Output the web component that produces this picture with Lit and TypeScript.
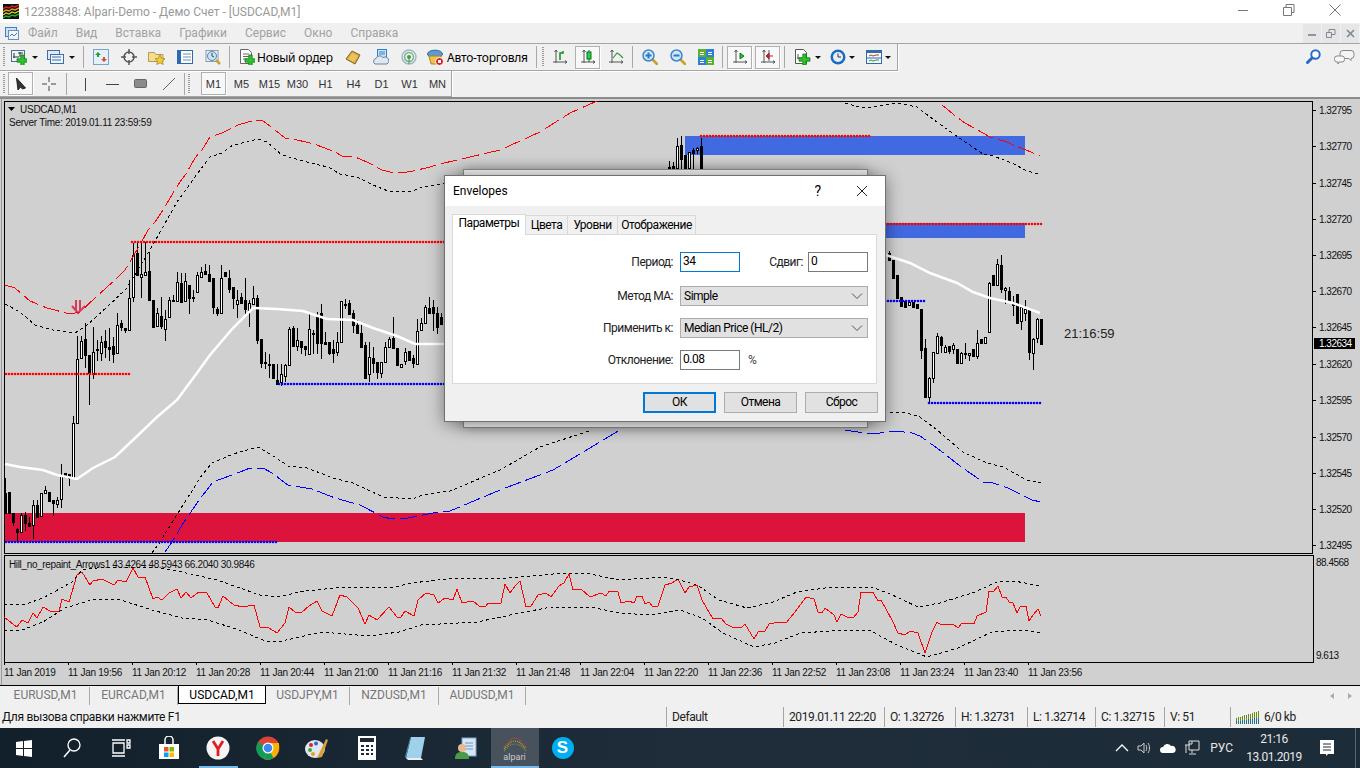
import { LitElement, html, css, svg } from "lit";
import { customElement } from "lit/decorators.js";

// candles are [bodyTop, bodyBottom, high, low, white?] measured on a 3x crop, 0 = no wick
type Bar = number[];
const LEFT: Bar[] = [
  [790,850,745,0,0],[785,850,0,0,0],[850,875,0,885,0],[897,905,895,935,0],[855,905,850,0,1],[855,880,845,900,0],
  [880,888,860,0,0],[825,885,810,925,1],[825,860,810,0,0],[790,858,0,0,1],[780,790,768,0,1],[785,812,0,0,0],
  [810,818,0,855,0],[810,822,800,830,1],[735,808,702,830,1],[730,740,0,0,0],[733,745,0,765,0],[580,745,558,0,1],
  [388,578,318,0,1],[333,385,318,0,1],[328,375,280,410,0],[375,430,0,523,0],[365,432,290,445,1],[358,360,330,390,0],
  [335,368,318,390,1],[333,350,300,380,0],[352,356,295,390,0],[348,372,320,395,0],[285,368,250,0,1],[280,290,270,300,0],
  [295,300,0,305,0],[205,300,150,0,1],[75,200,40,212,1],[70,135,40,0,0],[132,142,40,200,1],[125,135,35,0,1],
  [123,210,65,0,0],[210,290,0,0,0],[250,288,235,0,1],[258,288,200,295,0],[268,298,240,330,1],[210,262,200,0,1],
  [210,212,195,0,0],[155,212,125,0,1],[158,215,130,0,0],[152,212,130,0,1],[165,205,0,250,0],[200,205,180,212,0],
  [135,185,125,0,1],[127,142,110,0,1],[124,132,102,0,0],[132,152,105,0,0],[145,232,0,250,0],[237,248,230,255,0],
  [145,250,105,0,1],[127,137,0,0,0],[145,178,120,185,0],[172,205,0,235,0],[210,222,180,260,1],[200,220,190,0,0],
  [210,238,145,248,0],[220,240,210,288,1],[205,223,168,0,1],[203,330,195,340,0],[327,398,0,412,0],[397,399,365,415,0],
  [402,404,372,440,0],[402,445,0,0,0],[450,462,402,0,0],[433,455,402,465,1],[405,437,402,452,1],[298,404,290,0,1],
  [295,348,288,0,0],[330,348,295,360,1],[333,350,0,370,0],[348,358,0,375,0],[298,373,250,0,1],[310,312,300,370,0],
  [262,340,245,370,0],[250,340,222,383,0],[335,342,305,0,0],[335,368,0,372,0],[358,368,330,395,0],[335,365,305,375,1],
  [213,335,0,0,1],[221,224,208,235,0],[220,252,210,0,0],[250,285,240,305,0],[285,308,270,0,0],[308,350,280,0,0],
  [345,445,335,0,0],[382,433,335,452,1],[385,398,350,425,0],[397,427,0,443,0],[395,428,0,440,1],[350,395,335,0,1],
  [328,350,320,0,1],[323,355,262,0,0],[355,405,0,0,0],[403,412,0,0,1],[365,393,355,402,1],[363,390,0,0,0],
  [385,400,375,410,0],[302,403,268,0,1],[278,300,265,0,1],[232,280,225,0,1],[235,248,202,0,0],[232,250,210,300,0],
  [250,290,232,310,0],[262,283,250,0,0],
];
const RIGHT: Bar[] = [
  [68,90,62,0,0],[90,145,0,0,0],[135,205,0,0,0],[202,228,0,0,0],[213,230,0,0,0],[215,224,0,0,1],[215,230,0,0,0],
  [222,234,0,0,0],[237,360,0,383,0],[355,500,328,0,0],[445,500,440,520,1],[367,443,365,455,1],[318,368,308,0,1],
  [322,345,318,365,0],[352,365,345,0,1],[347,362,0,368,0],[345,358,340,370,1],[358,398,0,0,0],[368,398,365,400,1],
  [368,373,340,385,1],[368,375,0,390,1],[358,378,0,0,0],[338,378,300,383,1],[328,338,0,0,0],[320,340,0,0,1],
  [160,307,155,0,1],[135,165,0,0,0],[103,165,87,0,1],[105,178,75,185,0],[175,180,170,220,1],[182,213,170,0,0],
  [215,225,198,255,0],[193,278,0,0,0],[232,272,225,297,1],[238,248,210,270,1],[235,365,0,388,0],[327,368,325,417,1],
  [268,325,265,335,1],[268,342,0,0,0],
];
const TOP: Bar[] = [
  [215,220,198,0,0],[212,220,200,0,0],[153,220,130,0,1],[150,192,123,220,0],[180,220,0,0,0],[172,220,0,0,1],
  [165,173,158,220,0],[160,165,155,175,1],[153,220,128,0,0],
];

const pts = (a: number[][]) => a.map((p) => p.join(",")).join(" ");
const RED_A = [[5,285],[15,288],[23,295],[30,301],[47,308],[70,314],[80,312],[95,298],[117,278],[125,270],[140,245],[148,230],[155,222],[165,207],[170,198],[180,182],[186,174],[195,158],[202,150],[210,137],[222,133],[238,125],[255,120],[263,121],[270,126],[285,138],[293,139],[310,143],[317,145],[335,152],[342,156],[355,157],[367,162],[382,170],[390,172],[407,172],[413,171],[430,167],[440,164],[500,150],[540,132],[570,113],[597,101]];
const RED_B = [[942,105],[958,118],[965,123],[983,133],[990,137],[1007,142],[1013,145],[1031,152],[1040,156]];
const BLK_A = [[5,304],[20,312],[35,325],[53,330],[75,333],[87,325],[107,307],[127,288],[142,263],[147,255],[163,227],[177,202],[200,170],[210,157],[222,153],[233,145],[247,142],[258,139],[267,142],[282,155],[293,158],[310,163],[328,167],[340,174],[357,177],[373,185],[388,191],[412,191],[420,188],[440,184],[462,178]];
const BLK_B = [[845,103],[863,108],[880,106],[897,103],[917,107],[930,117],[955,135],[983,154],[993,156],[1012,163],[1027,171],[1039,174]];
const BLK_C = [[152,553],[160,542],[178,513],[202,475],[212,463],[233,454],[258,447],[275,457],[288,466],[307,468],[333,478],[353,483],[383,497],[412,499],[423,495],[450,491],[500,470],[540,447],[592,430]];
const BLK_D = [[890,412],[907,413],[920,417],[937,430],[963,452],[987,463],[1003,467],[1027,480],[1041,483]];
const BLU_A = [[165,552],[172,542],[182,525],[197,503],[203,495],[213,482],[240,472],[250,468],[263,468],[272,473],[288,485],[312,489],[335,498],[360,505],[383,517],[392,519],[408,518],[433,513],[450,511],[500,490],[553,470],[620,430]];
const BLU_B = [[845,430],[870,434],[880,433],[895,431],[912,433],[920,436],[937,448],[960,466],[983,482],[993,483],[1008,488],[1032,500],[1041,502]];
const MA_A = [[5,464],[20,467],[43,470],[57,475],[77,479],[93,468],[115,457],[133,440],[157,417],[177,400],[197,373],[210,355],[233,328],[253,308],[277,309],[303,311],[327,319],[353,320],[373,328],[397,336],[415,344],[446,344]];
const MA_B = [[886,255],[910,263],[930,273],[957,283],[973,292],[990,298],[1013,303],[1040,313]];
const SUB_RED = [[4,617],[9,621],[17,627],[22,620],[28,623],[33,613],[37,618],[43,607],[50,611],[59,612],[62,599],[69,602],[77,575],[82,572],[90,585],[93,581],[102,579],[114,585],[118,580],[126,582],[133,568],[138,577],[145,577],[153,599],[157,597],[162,600],[169,593],[177,589],[181,598],[186,592],[191,598],[199,592],[207,593],[215,607],[218,608],[223,596],[234,605],[243,607],[254,605],[260,627],[269,628],[277,633],[285,623],[289,607],[295,612],[301,613],[309,606],[317,601],[322,611],[332,616],[340,595],[347,597],[358,608],[365,624],[369,615],[377,620],[389,607],[397,617],[401,617],[405,611],[414,616],[418,600],[426,593],[434,595],[438,603],[445,598],[453,600],[457,589],[462,603],[473,601],[479,606],[486,606],[488,603],[501,603],[505,584],[510,593],[516,585],[520,581],[526,607],[531,606],[538,595],[546,593],[551,597],[559,586],[564,583],[569,574],[573,590],[581,589],[590,597],[601,593],[606,596],[609,591],[618,592],[621,603],[629,601],[634,603],[637,596],[642,596],[645,604],[649,602],[653,607],[658,606],[665,585],[672,583],[678,579],[685,593],[689,587],[697,585],[702,600],[713,619],[721,618],[726,624],[732,627],[741,628],[745,624],[754,639],[758,632],[765,631],[769,624],[780,622],[786,623],[795,612],[801,604],[806,597],[814,599],[818,612],[822,613],[825,608],[834,615],[837,622],[841,614],[847,617],[853,618],[858,612],[861,592],[873,592],[878,601],[881,600],[892,620],[898,633],[905,635],[910,631],[918,633],[925,653],[932,632],[937,622],[941,625],[953,624],[958,628],[962,623],[974,624],[977,616],[986,612],[989,591],[993,592],[998,586],[1002,597],[1006,597],[1009,602],[1013,603],[1017,613],[1020,607],[1026,606],[1029,621],[1033,615],[1038,609],[1041,616]];
const SUB_UP = [[4,604],[26,604],[43,598],[72,582],[82,570],[104,567],[160,568],[182,572],[217,580],[260,595],[278,597],[304,591],[347,587],[390,588],[412,583],[455,578],[499,579],[520,577],[564,573],[585,573],[620,580],[663,577],[680,580],[697,585],[719,600],[747,608],[773,602],[797,592],[832,587],[871,587],[888,593],[918,607],[940,603],[975,592],[997,582],[1014,581],[1041,586]];
const SUB_DN = [[4,630],[22,630],[43,622],[65,608],[95,599],[121,600],[152,610],[182,618],[208,620],[239,630],[265,641],[282,641],[321,632],[369,636],[399,632],[421,625],[477,622],[520,613],[551,607],[590,607],[620,613],[650,615],[680,610],[702,618],[723,633],[754,647],[775,643],[801,633],[845,630],[871,631],[897,645],[927,657],[958,648],[992,632],[1023,630],[1041,633]];

const PRICES: [string, number][] = [["1.32795",110],["1.32770",146],["1.32745",183],["1.32720",219],["1.32695",255],["1.32670",291],["1.32645",327],["1.32620",364],["1.32595",400],["1.32570",437],["1.32545",473],["1.32520",509],["1.32495",545]];
const TIMES = ["11 Jan 2019","11 Jan 19:56","11 Jan 20:12","11 Jan 20:28","11 Jan 20:44","11 Jan 21:00","11 Jan 21:16","11 Jan 21:32","11 Jan 21:48","11 Jan 22:04","11 Jan 22:20","11 Jan 22:36","11 Jan 22:52","11 Jan 23:08","11 Jan 23:24","11 Jan 23:40","11 Jan 23:56"];

function candles(bars: Bar[], x0: number, y0: number, sx = 3) {
  return bars.map((b, i) => {
    const x = Math.floor(x0 + 4 * i);
    const top = Math.round(y0 + b[0] / sx);
    const bot = Math.round(y0 + b[1] / sx);
    const hi = b[2] ? Math.round(y0 + b[2] / sx) : top;
    const lo = b[3] ? Math.round(y0 + b[3] / sx) : bot;
    return svg`<rect x=${x} y=${hi} width="1" height=${lo - hi + 1} fill="#000"></rect>
      <rect x=${x - 1} y=${top} width="3" height=${Math.max(bot - top + 1, 2)} fill="#000"></rect>
      ${b[4] && bot - top > 1 ? svg`<rect x=${x} y=${top + 1} width="1" height=${bot - top - 1} fill="#fff"></rect>` : ""}`;
  });
}

const ic = (body: unknown, w = 16, h = 16) =>
  html`<svg class="ic" width=${w} height=${h} viewBox="0 0 ${w} ${h}">${body}</svg>`;

const plus = (x: number, y: number, s = 11) => svg`<path transform="translate(${x} ${y})" d="M${s * 0.35} 0h${s * 0.3}v${s * 0.35}h${s * 0.35}v${s * 0.3}h${-s * 0.35}v${s * 0.35}h${-s * 0.3}v${-s * 0.35}H0v${-s * 0.3}h${s * 0.35}z" fill="#2fc42f" stroke="#0e7a12" stroke-width=".8"></path>`;
const axes = svg`<path d="M4 1v13M1 13h14M2.500 3L4 1l1.500 2M13 11.500l2 1.500-2 1.500" fill="none" stroke="#555"></path>`;
const magnifier = (sign: string) => svg`<path d="M10 10l5 5" stroke="#c9a227" stroke-width="2.600" stroke-linecap="round"></path>
  <circle cx="6.500" cy="6.500" r="5.500" fill="#cfe6fa" stroke="#3f86c8" stroke-width="1.500"></circle>
  <path d=${sign} stroke="#2f78be" stroke-width="2"></path>`;

const ICONS = {
  app: svg`<rect width="16" height="15" fill="#111"></rect><path d="M0 5l3-2 3 1 3-2 3 1 4-2" fill="none" stroke="#e02020" stroke-width="1.500"></path><path d="M0 8l3-2 3 1 3-2 3 1 4-2" fill="none" stroke="#e0a020" stroke-width="1.500"></path><path d="M0 11l3-2 3 1 3-2 3 1 4-2" fill="none" stroke="#d8d820" stroke-width="1.200"></path><path d="M0 14l3-2 3 1 3-2 3 1 4-2" fill="none" stroke="#20b030" stroke-width="1.500"></path>`,
  mdi: svg`<rect x=".5" y="2.500" width="11" height="9" fill="#cfe2f5" stroke="#3c7fc4"></rect><rect x="3.500" y="5.500" width="10" height="9" fill="#eef5fc" stroke="#6a8fb5"></rect><path d="M5 11l2-2 2 2 3-3" fill="none" stroke="#4a76a8"></path>`,
  newChart: svg`<rect x=".5" y="1.500" width="13" height="11" fill="#eef3f8" stroke="#4c6f92"></rect><path d="M3 4v5M2 8h6M9 3v5M7 4h5" stroke="#333" fill="none"></path>${plus(6, 6)}`,
  profiles: svg`<rect x=".5" y="1.500" width="12" height="9" fill="#dfeaf6" stroke="#3d6fa5"></rect><rect x="3.500" y="5.500" width="13" height="9" fill="#eef4fb" stroke="#3d6fa5"></rect><path d="M5 8h9M5 11h9" stroke="#3d6fa5"></path>`,
  market: svg`<rect x=".5" y=".5" width="15" height="15" fill="#e6f0fa" stroke="#7aa3cc"></rect><path d="M5 3l3 3H6v2H4V6H2z" fill="#25a035"></path><path d="M11 13l3-3h-2V8h-2v2H8z" fill="#d8502a"></path>`,
  cross: svg`<circle cx="8" cy="8" r="5" fill="none" stroke="#555" stroke-width="1.500"></circle><path d="M8 0v5M8 11v5M0 8h5M11 8h5" stroke="#555" stroke-width="1.500"></path>`,
  folder: svg`<path d="M.5 3.500h6l1.500 2h7v7H.5z" fill="#f3dc94" stroke="#b79a4a"></path><path d="M12 6l1.700 3.300 3.300.5-2.500 2.300.7 3.400-3.200-1.700-3.200 1.700.7-3.400L7 9.800l3.300-.5z" fill="#f2c93a" stroke="#a88a1e" stroke-width=".8"></path>`,
  list: svg`<rect x=".5" y="1.500" width="15" height="13" fill="#fff" stroke="#2c6cae"></rect><rect x="1" y="2" width="3" height="12" fill="#2c6cae"></rect><path d="M6 5h8M6 8h8M6 11h8" stroke="#6d8eb0"></path>`,
  tester: svg`<rect x="1" y="1.500" width="12" height="11" fill="#e9eef3" stroke="#8b9cae"></rect><circle cx="7" cy="7" r="4.500" fill="#cfe2f4" stroke="#4c88c0"></circle><path d="M7 4v3l2 1" stroke="#345" fill="none"></path><path d="M11 11l4 4" stroke="#c9a227" stroke-width="2.500"></path>`,
  order: svg`<path d="M1.500.5h8l3 3v11h-11z" fill="#fff" stroke="#666"></path><path d="M4 5h6M4 7.500h6M4 10h4" stroke="#666"></path>${plus(6, 6)}`,
  book: svg`<path d="M1 10l6-8 8 4-5 9z" fill="#d9a93e" stroke="#8a6518"></path><path d="M3 10l4.500-6 5.500 3-4 6z" fill="#eac363"></path>`,
  cloud: svg`<rect x="4.500" y=".5" width="9" height="9" fill="#cfe4f7" stroke="#2f7fc9"></rect><path d="M6 3h6M6 5h6" stroke="#2f7fc9"></path><path d="M2 15a3 3 0 0 1 1-5.500 4 4 0 0 1 7-1 3.300 3.300 0 0 1 4 6.500z" fill="#dfe8f0" stroke="#67829c"></path>`,
  signal: svg`<circle cx="8" cy="8" r="7" fill="none" stroke="#9fb6c6" stroke-width="1.500"></circle><circle cx="8" cy="8" r="4.500" fill="none" stroke="#74b77e" stroke-width="1.500"></circle><circle cx="8" cy="8" r="2" fill="#3f9a4d"></circle><path d="M8 8v7" stroke="#3f9a4d"></path>`,
  auto: svg`<ellipse cx="8" cy="5" rx="7.500" ry="3.800" fill="#5c9bd1" stroke="#33699a"></ellipse><path d="M2 7h12l-1 8H4z" fill="#f0c24a" stroke="#a8842a"></path><circle cx="12.500" cy="12.500" r="4" fill="#d62020" stroke="#fff"></circle><rect x="11" y="11" width="3" height="3" fill="#fff"></rect>`,
  bars: svg`${axes}<path d="M8 11V4h3V2" fill="none" stroke="#0d8f1c" stroke-width="1.500"></path>`,
  candle: svg`${axes}<path d="M9 1v12" stroke="#0d6f1c"></path><rect x="7" y="3" width="4" height="7" fill="#27d24a" stroke="#0d6f1c"></rect>`,
  lineCh: svg`${axes}<path d="M5 9l4-5 3 2 3 3" fill="none" stroke="#2f9a3c" stroke-width="1.200"></path>`,
  zoomIn: magnifier("M3.500 6.500h6M6.500 3.500v6"),
  zoomOut: magnifier("M3.500 6.500h6"),
  grid: svg`<rect x="0" y="0" width="8" height="8" fill="#5ab130"></rect><rect x="8" y="0" width="8" height="8" fill="#2e7fd6"></rect><rect x="0" y="8" width="8" height="8" fill="#2e7fd6"></rect><rect x="8" y="8" width="8" height="8" fill="#5ab130"></rect><path d="M2 3.500h4M2 5.500h4M10 3.500h4M10 5.500h4M2 11.500h4M2 13.500h4M10 11.500h4M10 13.500h4" stroke="#fff"></path>`,
  shift: svg`${axes}<path d="M8 4v6l4-3z" fill="#2fbf3f" stroke="#0d7a1c"></path>`,
  shiftEnd: svg`${axes}<path d="M9 1v11" stroke="#1668b8"></path><path d="M6 7h7M9 4l-3 3 3 3z" stroke="#c41e1e" fill="#c41e1e"></path>`,
  addDoc: svg`<path d="M1.500.5h8l3 3v11h-11z" fill="#fff" stroke="#555"></path><path d="M4 5v5M3 9h5" stroke="#555" fill="none"></path>${plus(5, 5)}`,
  clock: svg`<circle cx="8" cy="8" r="7.500" fill="#1b6dc1"></circle><circle cx="8" cy="8" r="5" fill="#e8eef4"></circle><path d="M8 4.500V8h3" fill="none" stroke="#333"></path>`,
  tpl: svg`<rect x=".5" y="1.500" width="15" height="13" fill="#f4f7fb" stroke="#2f6ca8"></rect><rect x="1" y="2" width="14" height="2" fill="#2f6ca8"></rect><path d="M1 9h14" stroke="#2f6ca8"></path><path d="M3 7l2-1 2 1 3-1 3 0" fill="none" stroke="#c0392b"></path><path d="M3 12l2-1 2 1 3-1 3 0" fill="none" stroke="#27a040"></path>`,
  search: svg`<circle cx="9.500" cy="5.500" r="4.200" fill="#fff" stroke="#2968c8" stroke-width="2"></circle><path d="M6 9l-4.500 4.500" stroke="#2968c8" stroke-width="3" stroke-linecap="round"></path>`,
  chat: svg`<path d="M9 1.500h8a3 3 0 0 1 3 3v2a3 3 0 0 1-3 3v2l-2-2H9a3 3 0 0 1-3-3v-2a3 3 0 0 1 3-3z" fill="#f4f4f4" stroke="#888"></path><path d="M3 7h5a2.500 2.500 0 0 1 2.500 2.500v1A2.500 2.500 0 0 1 8 13H5l-1 2v-2H3a2.500 2.500 0 0 1-2.500-2.500v-1A2.500 2.500 0 0 1 3 7z" fill="#f8f8f8" stroke="#888"></path>`,
  arrow: svg`<path d="M4.500 1l9 10-3 1-2-2v0L6 13z" fill="#333" stroke="#222" stroke-linejoin="round" transform="translate(-1 1)"></path>`,
  crossThin: svg`<path d="M8 1v5M8 10v5M1 8h5M10 8h5" stroke="#444"></path>`,
  vline: svg`<path d="M8.500 2v13" stroke="#444"></path>`,
  hline: svg`<path d="M1 8.500h13" stroke="#444"></path>`,
  rect: svg`<rect x="1.500" y="3.500" width="12" height="8" rx="1" fill="#8b8b8b" stroke="#666"></rect>`,
  diag: svg`<path d="M2 14L14 2" stroke="#666"></path>`,
};

const T = {
  win: svg`<path d="M3 5l7-1v7H3zM11 3.900L19 3v8h-8zM3 12h7v7l-7-1zM11 12h8v8l-8-1z" fill="#fff"></path>`,
  search: svg`<circle cx="13" cy="8" r="6" fill="none" stroke="#fff" stroke-width="1.300"></circle><path d="M9 13l-6 7" stroke="#fff" stroke-width="1.500"></path>`,
  view: svg`<path d="M4 6h11v10H4zM3 3h13M3 19h13M18 3h3v3h-3zM18 8h3v3h-3z" fill="none" stroke="#fff" stroke-width="1.300"></path>`,
  store: svg`<path d="M2 8h20v15H2z" fill="#fff"></path><path d="M8 8V4a4 4 0 0 1 8 0v4" fill="none" stroke="#fff" stroke-width="1.500"></path><rect x="7" y="11" width="4.500" height="4.500" fill="#f25022"></rect><rect x="12.500" y="11" width="4.500" height="4.500" fill="#7fba00"></rect><rect x="7" y="16.500" width="4.500" height="4.500" fill="#00a4ef"></rect><rect x="12.500" y="16.500" width="4.500" height="4.500" fill="#ffb900"></rect>`,
  yandex: svg`<circle cx="12" cy="12" r="11.500" fill="#f4f4f4"></circle><path d="M7 5l5 8v7M17 5l-5 8" fill="none" stroke="#e02020" stroke-width="2.800"></path>`,
  chrome: svg`<circle cx="12" cy="12" r="11.500" fill="#db4437"></circle><path d="M12 12L2 6A11.500 11.500 0 0 0 8 23z" fill="#0f9d58"></path><path d="M12 12l-4 11A11.500 11.500 0 0 0 23 12V7H12z" fill="#f4b400"></path><path d="M12 12l-4 11a11.500 11.500 0 0 0 9.500-1z" fill="#0f9d58"></path><circle cx="12" cy="12" r="5.500" fill="#fff"></circle><circle cx="12" cy="12" r="4.300" fill="#4285f4"></circle>`,
  paint: svg`<ellipse cx="10" cy="13" rx="10" ry="9" fill="#dfe8ee"></ellipse><circle cx="6" cy="9" r="2" fill="#d23"></circle><circle cx="11" cy="7.500" r="2" fill="#3a5fd0"></circle><circle cx="5" cy="14" r="2" fill="#3aa84a"></circle><circle cx="8" cy="18" r="2" fill="#e8a020"></circle><path d="M12 22L21 3l2 1-6 17z" fill="#d8a03a"></path>`,
  calc: svg`<rect x="3" y="0" width="18" height="24" fill="#fff"></rect><rect x="5" y="2" width="14" height="4" fill="#1b2a38"></rect><path d="M6 9h3v2H6zM11 9h3v2h-3zM16 9h2v2h-2zM6 13h3v2H6zM11 13h3v2h-3zM16 13h2v2h-2zM6 17h3v2H6zM11 17h3v2h-3zM16 17h2v2h-2z" fill="#1b2a38"></path>`,
  note: svg`<path d="M7 1h14l-4 21H2z" fill="#9fd2ea"></path><path d="M2 22h15l2 2H4z" fill="#e8eef2"></path><path d="M7 1L2 22l-1-1L6 2z" fill="#4b8fb0"></path>`,
  people: svg`<rect x="8" y="2" width="14" height="18" fill="#d6e6f5" stroke="#7ea6cc"></rect><path d="M11 7h8M11 10h8M11 13h8" stroke="#6a96c4"></path><circle cx="8" cy="12" r="4" fill="#e8b890"></circle><path d="M1 23c0-6 3-7 7-7s7 1 7 7z" fill="#4a9a48"></path>`,
  alpari: svg`<path d="M2 13c5-5 7-9 11-9s6 4 11 9" fill="none" stroke="#d04a2a" stroke-width="1.200" stroke-dasharray="1 1"></path><path d="M2 15c5-5 7-8 11-8s6 3 11 8" fill="none" stroke="#d8a030" stroke-width="1.200" stroke-dasharray="1 1"></path><path d="M2 17c5-5 7-7 11-7s6 2 11 7" fill="none" stroke="#5aa040" stroke-width="1.200" stroke-dasharray="1 1"></path>`,
  up: svg`<path d="M1 11l6-6 6 6" fill="none" stroke="#fff" stroke-width="1.300"></path>`,
  speaker: svg`<path d="M1 6h3l3-3v10l-3-3H1zM9 5c1 2 1 4 0 6M11 3c2 3 2 7 0 10" fill="none" stroke="#ccc"></path>`,
  cloud: svg`<path d="M3 13a3 3 0 0 1 0-6 4.500 4.500 0 0 1 8-1 3.500 3.500 0 0 1 2 7z" fill="#fff"></path>`,
  net: svg`<path d="M5 1h10v9H5zM5 4h3V1M1 5h5M2 5v8M8 10v3M5 14h7" fill="none" stroke="#ddd"></path>`,
  notif: svg`<path d="M1 1h14v14H9l-2 2v-2H1z" fill="#fff"></path><path d="M4 5h8M4 8h8M4 11h8" stroke="#1d2b38"></path>`,
};

@customElement("app-root")
export class AppRoot extends LitElement {
  static styles = css`
    :host {
      display: block;
      width: 1360px;
      height: 768px;
      overflow: hidden;
      background: #f0f0f0;
      font-family: Roboto, "Liberation Sans", sans-serif;
      font-size: 12px;
      color: #000;
    }
    .ic { display: block; flex: none; }
    .title { height: 23px; background: #fff; display: flex; align-items: center; color: #999; padding: 0 0 0 3px; }
    .title .name { margin-left: 5px; flex: 1; }
    .wbtn { width: 46px; display: flex; justify-content: center; margin: -3px 0 0 0; }
    .wins { display: flex; padding-right: 2px; }
    .menu { height: 20px; display: flex; align-items: center; color: #a2a2a2; padding-left: 5px; border-bottom: 1px solid #a5a5a5; }
    .menu .mic { margin-right: 7px; }
    .menu span { margin-right: 18px; }
    .mdi { margin-left: auto; display: flex; gap: 1px; align-self: stretch; padding: 1px 1px 0 0; }
    .mdi div { width: 18px; background: #e6e6e6; display: flex; align-items: center; justify-content: center; }
    .row { height: 26px; display: flex; position: relative; }
    .row.tall { height: 27px; }
    .band { display: flex; align-items: center; height: 100%; box-sizing: border-box; border-bottom: 1px solid #a5a5a5; box-shadow: 1px 1px 0 #fff; flex: none; }
    .band.r1 { width: 898px; border-right: 1px solid #a5a5a5; }
    .band.r2 { width: 452px; border-right: 1px solid #a5a5a5; }
    .grip { width: 2px; height: 20px; margin: 0 3px; background: repeating-linear-gradient(#999 0 1px, transparent 1px 2px); flex: none; }
    .sep { width: 1px; height: 22px; background: #a8a8a8; flex: none; }
    .btn { width: 25px; height: 23px; margin-right: 3px; box-sizing: border-box; display: flex; align-items: center; justify-content: center; flex: none; font-family: "Liberation Sans", sans-serif; font-size: 11px; color: #333; }
    .btn.on { border: 1px solid #b0b0b0; background: #f8f8f8; box-shadow: 1px 1px 0 #fff; }
    .dd { width: 33px; justify-content: flex-start; padding-left: 3px; gap: 5px; }
    .dd.far { padding-left: 5px; gap: 3px; }
    .dd::after { content: ""; border: 3px solid transparent; border-top: 3px solid #111; border-bottom: 0; }
    .lbl { width: auto; justify-content: flex-start; gap: 2px; font-family: "Noto Sans", sans-serif; font-size: 12px; color: #000; letter-spacing: -.2px; }
    .right-ic { position: absolute; right: 5px; top: 5px; display: flex; gap: 12px; align-items: center; }
    .chart { position: relative; height: 588px; box-sizing: border-box; background: #d0d0d0; }
    .chart svg.plot { display: block; }
    .plot text { font-family: "Liberation Sans", sans-serif; font-size: 10px; fill: #111; letter-spacing: -.25px; }
    .plot text.price { letter-spacing: -.5px; }
    .plot text.hill { letter-spacing: -.35px; }
    .plot text.clock { font-size: 13px; letter-spacing: 0; fill: #222; }
    .plot text.now { fill: #fff; letter-spacing: -.5px; }
    .crisp { shape-rendering: crispEdges; }
    .ln { fill: none; stroke-width: 1; shape-rendering: crispEdges; }
    .dash { stroke-dasharray: 3 3; }
    .long { stroke-dasharray: 17 5; }
    .dots { fill: none; stroke-width: 2.600; stroke-dasharray: 0 3; stroke-linecap: round; }
    .ma { fill: none; stroke: #fff; stroke-width: 2.500; }
    .sig { fill: none; stroke: #dc143c; stroke-width: 2; opacity: .8; }
    .behind { position: absolute; left: 463px; top: 72px; width: 405px; height: 259px; box-sizing: border-box; background: #f0f0f0; border: 1px solid #8a8a8a; box-shadow: 0 0 12px rgba(0, 0, 0, .35); }
    .dlg { position: absolute; left: 444px; top: 78px; width: 442px; height: 247px; box-sizing: border-box; background: #f0f0f0; border: 1px solid #707070; box-shadow: 0 2px 16px rgba(0, 0, 0, .45); display: flex; flex-direction: column; letter-spacing: -.5px; }
    .dlg-head { height: 30px; background: #fff; display: flex; align-items: center; padding-left: 8px; flex: none; letter-spacing: 0; }
    .dlg-head b { font-weight: 400; flex: 1; }
    .dlg-head i { font-style: normal; font-size: 14px; margin-right: 35px; }
    .dlg-head svg { margin-right: 17px; }
    .tabs { display: flex; align-items: flex-end; height: 28px; padding-left: 7px; flex: none; }
    .tab { height: 19px; box-sizing: border-box; border: 1px solid #d9d9d9; border-left: 0; border-bottom: 0; text-align: center; line-height: 18px; }
    .tab.on { height: 21px; border-left: 1px solid #d9d9d9; background: #fff; margin-bottom: -1px; position: relative; line-height: 17px; }
    .panel { margin: 0 8px 0 7px; height: 150px; box-sizing: border-box; background: #fff; border: 1px solid #d9d9d9; display: grid; grid-template-columns: 220px 188px; grid-template-rows: 22px 20px 20px 20px; column-gap: 7px; row-gap: 12px; align-content: start; padding-top: 17px; flex: none; }
    .panel label { text-align: right; line-height: 21px; color: #222; }
    .fields { display: flex; align-items: flex-start; }
    .field { width: 60px; height: 20px; box-sizing: border-box; border: 1px solid #7a7a7a; background: #fff; padding-left: 2px; line-height: 17px; flex: none; }
    .field.focus { border-color: #0078d7; }
    .shift { margin-left: auto; margin-right: 5px; color: #222; line-height: 21px; }
    .pct { margin-left: 8px; color: #444; line-height: 20px; }
    .combo { height: 20px; box-sizing: border-box; border: 1px solid #adadad; background: #e1e1e1; display: flex; align-items: center; justify-content: space-between; padding: 0 4px 0 3px; }
    .actions { display: flex; justify-content: flex-end; gap: 8px; padding: 8px 7px 0 0; }
    .actions div { width: 73px; height: 21px; box-sizing: border-box; border: 1px solid #adadad; background: #e1e1e1; text-align: center; line-height: 19px; }
    .actions .def { border: 2px solid #0078d7; line-height: 17px; }
    .tabsbar { height: 21px; box-sizing: border-box; border-top: 1px solid #000; display: flex; color: #777; position: relative; padding-left: 2px; }
    .ct { height: 18px; line-height: 17px; border-right: 1px solid #aaa; box-sizing: border-box; text-align: center; margin-top: 1px; }
    .ct.on { height: 19px; color: #000; background: #fff; border: 1px solid #000; margin-top: -1px; line-height: 18px; }
    .nav { margin-left: auto; display: flex; gap: 14px; align-items: center; padding-right: 8px; }
    .nav::before, .nav::after { content: ""; border: 3px solid transparent; }
    .nav::before { border-right: 4px solid #aaa; border-left: 0; }
    .nav::after { border-left: 4px solid #aaa; border-right: 0; }
    .status { height: 22px; display: flex; align-items: center; padding-left: 2px; color: #111; letter-spacing: -.3px; }
    .cell { height: 20px; line-height: 19px; border-left: 1px solid #a5a5a5; padding-left: 5px; box-sizing: border-box; flex: none; white-space: nowrap; color: #222; display: flex; align-items: center; gap: 4px; letter-spacing: -.4px; }
    .meter { display: block; }
    .taskbar { height: 40px; background: linear-gradient(90deg, #12202c, #1f2d3a 50%, #1d2c39); display: flex; color: #e8e8e8; }
    .tk { width: 48px; display: flex; align-items: center; justify-content: center; position: relative; flex: none; }
    .tk.wide { width: 49.500px; }
    .tk.run::after { content: ""; position: absolute; bottom: 0; left: 5px; right: 5px; height: 2px; background: #76b9ed; }
    .tk.act { background: #47525c; flex-direction: column; color: #ccc; font-size: 9px; line-height: 10px; }
    .tk.act::after { content: ""; position: absolute; bottom: 0; left: 0; right: 0; height: 2px; background: #76b9ed; }
    .skype { width: 22px; height: 22px; border-radius: 50%; background: #00aff0; color: #fff; font: 700 17px/22px "Liberation Sans", sans-serif; text-align: center; }
    .tray { margin-left: auto; display: flex; align-items: center; gap: 8px; }
    .lang { font-size: 12px; margin-left: 2px; }
    .when { width: 66px; text-align: center; font-size: 12px; line-height: 18px; margin-right: 4px; letter-spacing: -.5px; }
    .desk { width: 5px; align-self: stretch; border-left: 1px solid #5a6670; margin-left: 12px; box-sizing: border-box; }
  `;

  private renderChart() {
    const rects = svg`
      <rect x="5" y="513" width="1020" height="29" fill="#dc143c" class="crisp"></rect>
      <rect x="685" y="136" width="340" height="19" fill="#4169e1" class="crisp"></rect>
      <rect x="685" y="223" width="340" height="15" fill="#4169e1" class="crisp"></rect>`;
    const lines = svg`
      <polyline class="ln long" stroke="#f00" points=${pts(RED_A)}></polyline>
      <polyline class="ln long" stroke="#f00" points=${pts(RED_B)}></polyline>
      <polyline class="ln dash" stroke="#000" points=${pts(BLK_A)}></polyline>
      <polyline class="ln dash" stroke="#000" points=${pts(BLK_B)}></polyline>
      <polyline class="ln dash" stroke="#000" points=${pts(BLK_C)}></polyline>
      <polyline class="ln dash" stroke="#000" points=${pts(BLK_D)}></polyline>
      <polyline class="ln long" stroke="#00f" points=${pts(BLU_A)}></polyline>
      <polyline class="ln long" stroke="#00f" points=${pts(BLU_B)}></polyline>`;
    const dots = svg`
      <path class="dots" stroke="#f00" d="M132 242H446M6 374H130M701 136H870M885 224H1042"></path>
      <path class="dots" stroke="#00f" d="M279 384H446M6 542H278M885 301H926M929 403H1042"></path>`;
    return html`<svg class="plot" width="1360" height="588" viewBox="0 97 1360 588">
      <rect x="0" y="97" width="1360" height="2" fill="#8c8c8c"></rect>
      <rect x="1" y="99" width="1" height="586" fill="#9a9a9a"></rect>
      <path class="crisp" fill="none" stroke="#000" d="M4.500 101.500H1312.500V553.500H4.500ZM4.500 555.500H1313.500V662.500H4.500Z"></path>
      ${rects}${candles(LEFT, 16 / 3, 230)}${candles(RIGHT, 889, 230)}${candles(TOP, 669, 95)}
      ${lines}${dots}
      <polyline class="ma" points=${pts(MA_A)}></polyline>
      <polyline class="ma" points=${pts(MA_B)}></polyline>
      <path class="sig" d="M76 300v11M80 300v11M72 306l6 7 7-7"></path>
      <polyline class="ln" stroke="#f00" points=${pts(SUB_RED)}></polyline>
      <polyline class="ln dash" stroke="#000" points=${pts(SUB_UP)}></polyline>
      <polyline class="ln dash" stroke="#000" points=${pts(SUB_DN)}></polyline>
      <path d="M8 107h7l-3.500 4z" fill="#000"></path>
      <text x="20" y="113">USDCAD,M1</text>
      <text x="9" y="126">Server Time: 2019.01.11 23:59:59</text>
      <text class="hill" x="9" y="568">Hill_no_repaint_Arrows1 43.4264 48.5943 66.2040 30.9846</text>
      ${PRICES.map(([p, y]) => svg`<rect class="crisp" x="1313" y=${y} width="3" height="1" fill="#000"></rect><text class="price" x="1319" y=${y + 4}>${p}</text>`)}
      <rect x="1314" y="338" width="41" height="11" fill="#000"></rect>
      <text class="now" x="1319" y="347">1.32634</text>
      <text class="clock" x="1064" y="338">21:16:59</text>
      <text class="price" x="1316" y="566">88.4568</text>
      <text class="price" x="1316" y="659">9.613</text>
      ${TIMES.map((t, i) => svg`<rect class="crisp" x=${4 + 64 * i} y="662" width="1" height="3" fill="#000"></rect><text x=${4 + 64 * i} y="676">${t}</text>`)}
    </svg>`;
  }

  private renderDialog() {
    const caret = html`<svg width="12" height="8" viewBox="0 0 12 8"><path d="M1 1.500l5 5 5-5" fill="none" stroke="#555"></path></svg>`;
    const dtabs: [string, number][] = [["Цвета", 42], ["Уровни", 50], ["Отображение", 78]];
    return html`<div class="behind"></div>
      <div class="dlg">
        <div class="dlg-head">
          <b>Envelopes</b><i>?</i>
          <svg width="12" height="12" viewBox="0 0 12 12"><path d="M1 1l10 10M11 1L1 11" stroke="#222"></path></svg>
        </div>
        <div class="tabs">
          <div class="tab on" style="width:74px">Параметры</div>
          ${dtabs.map(([t, w]) => html`<div class="tab" style="width:${w}px">${t}</div>`)}
        </div>
        <div class="panel">
          <label>Период:</label>
          <div class="fields">
            <div class="field focus">34</div>
            <span class="shift">Сдвиг:</span>
            <div class="field">0</div>
          </div>
          <label>Метод МА:</label>
          <div class="combo">Simple ${caret}</div>
          <label>Применить к:</label>
          <div class="combo">Median Price (HL/2) ${caret}</div>
          <label>Отклонение:</label>
          <div class="fields"><div class="field">0.08</div><span class="pct">%</span></div>
        </div>
        <div class="actions">
          <div class="def">ОК</div><div>Отмена</div><div>Сброс</div>
        </div>
      </div>`;
  }

  render() {
    const tfs = ["M5", "M15", "M30", "H1", "H4", "D1", "W1", "MN"];
    const tabs: [string, number, boolean?][] = [["EURUSD,M1", 88], ["EURCAD,M1", 88], ["USDCAD,M1", 88, true], ["USDJPY,M1", 84], ["NZDUSD,M1", 89], ["AUDUSD,M1", 87]];
    const cells: [string, number][] = [["Default", 117], ["2019.01.11 22:20", 101], ["O: 1.32726", 71], ["H: 1.32731", 72], ["L: 1.32714", 68], ["C: 1.32715", 69], ["V: 51", 66]];
    const apps = [T.store, T.yandex, T.chrome, T.paint, T.calc, T.note, T.people];
    // traffic meter of the status bar: rising columns, olive on top of teal
    const meter = Array.from({ length: 12 }, (_, i) => {
      const h = 6 + Math.round((i * 7) / 11);
      return svg`<rect x=${i * 2} y=${13 - h} width="1" height=${h / 2} fill="#6e8c10"></rect><rect x=${i * 2} y=${13 - h / 2} width="1" height=${h / 2} fill="#1f6f86"></rect>`;
    });
    return html`
      <div class="title">
        ${ic(ICONS.app)}
        <span class="name">12238848: Alpari-Demo - Демо Счет - [USDCAD,M1]</span>
        <div class="wins">
          <div class="wbtn">${ic(svg`<path d="M1 6.500h10" stroke="#777"></path>`, 12, 12)}</div>
          <div class="wbtn">${ic(svg`<path d="M.5 3.500h8v8h-8zM3 3V.5h8v8H9" fill="none" stroke="#777"></path>`, 12, 12)}</div>
          <div class="wbtn">${ic(svg`<path d="M.5.5l11 11M11.500.5l-11 11" stroke="#777"></path>`, 12, 12)}</div>
        </div>
      </div>
      <div class="menu">
        <div class="mic">${ic(ICONS.mdi)}</div>
        <span>Файл</span><span>Вид</span><span>Вставка</span><span>Графики</span><span>Сервис</span><span>Окно</span><span>Справка</span>
        <div class="mdi">
          <div>${ic(svg`<path d="M1 6h8" stroke="#8a96a3" stroke-width="2"></path>`, 10, 9)}</div>
          <div>${ic(svg`<path d="M.5 3.500h5v5h-5zM3 3V.5h6v5H6" fill="none" stroke="#7f8a96"></path>`, 10, 9)}</div>
          <div>${ic(svg`<path d="M1 1l7 7M8 1L1 8" stroke="#7f8a96" stroke-width="1.700"></path>`, 9, 9)}</div>
        </div>
      </div>
      <div class="row tall">
        <div class="band r1">
          <div class="grip"></div>
          <div class="btn dd">${ic(ICONS.newChart)}</div>
          <div class="btn dd">${ic(ICONS.profiles, 17)}</div>
          <div class="sep" style="margin:0 4px 0 3px"></div>
          <div class="btn">${ic(ICONS.market)}</div>
          <div class="btn">${ic(ICONS.cross)}</div>
          <div class="btn">${ic(ICONS.folder, 18)}</div>
          <div class="btn">${ic(ICONS.list)}</div>
          <div class="btn">${ic(ICONS.tester)}</div>
          <div class="sep" style="margin:0 5px 0 1px"></div>
          <div class="btn lbl" style="width:102px;padding-left:4px">${ic(ICONS.order)}Новый ордер</div>
          <div class="btn">${ic(ICONS.book)}</div>
          <div class="btn">${ic(ICONS.cloud)}</div>
          <div class="btn">${ic(ICONS.signal)}</div>
          <div class="btn lbl" style="width:109px;padding-left:3px">${ic(ICONS.auto, 18)}Авто-торговля</div>
          <div class="sep" style="margin:0 2px 0 0"></div>
          <div class="grip"></div>
          <div class="btn">${ic(ICONS.bars)}</div>
          <div class="btn on">${ic(ICONS.candle)}</div>
          <div class="btn">${ic(ICONS.lineCh)}</div>
          <div class="sep" style="margin:0 4px 0 1px"></div>
          <div class="btn">${ic(ICONS.zoomIn)}</div>
          <div class="btn">${ic(ICONS.zoomOut)}</div>
          <div class="btn">${ic(ICONS.grid)}</div>
          <div class="sep" style="margin:0 4px 0 1px"></div>
          <div class="btn on">${ic(ICONS.shift)}</div>
          <div class="btn on">${ic(ICONS.shiftEnd)}</div>
          <div class="sep" style="margin:0 4px 0 1px"></div>
          <div class="btn dd far">${ic(ICONS.addDoc, 18)}</div>
          <div class="btn dd far">${ic(ICONS.clock)}</div>
          <div class="btn dd far">${ic(ICONS.tpl)}</div>
        </div>
        <div class="right-ic">
          ${ic(ICONS.search)}
          ${ic(ICONS.chat, 21)}
        </div>
      </div>
      <div class="row">
        <div class="band r2">
          <div class="grip"></div>
          <div class="btn on">${ic(ICONS.arrow)}</div>
          <div class="btn">${ic(ICONS.crossThin)}</div>
          <div class="sep" style="margin:0 5px 0 2px"></div>
          <div class="btn">${ic(ICONS.vline)}</div>
          <div class="btn">${ic(ICONS.hline)}</div>
          <div class="btn">${ic(ICONS.rect)}</div>
          <div class="btn">${ic(ICONS.diag)}</div>
          <div class="sep"></div>
          <div class="grip" style="margin:0 11px 0 3px"></div>
          <div class="btn on">M1</div>
          ${tfs.map((t) => html`<div class="btn">${t}</div>`)}
        </div>
      </div>
      <div class="chart">
        ${this.renderChart()}
        ${this.renderDialog()}
      </div>
      <div class="tabsbar">
        ${tabs.map(([t, w, on]) => html`<div class="ct ${on ? "on" : ""}" style="width:${w}px">${t}</div>`)}
        <div class="nav"></div>
      </div>
      <div class="status">
        <div style="width:664px;flex:none">Для вызова справки нажмите F1</div>
        ${cells.map(([t, w]) => html`<div class="cell" style="width:${w}px">${t}</div>`)}
        <div class="cell">
          <svg class="meter" width="24" height="13">${meter}</svg>
          6/0 kb
        </div>
      </div>
      <div class="taskbar">
        <div class="tk">${ic(T.win, 22, 22)}</div>
        <div class="tk">${ic(T.search, 22, 22)}</div>
        <div class="tk">${ic(T.view, 22, 22)}</div>
        ${apps.map((a, i) => html`<div class="tk wide ${i === 1 ? "run" : ""}">${ic(a, 24, 24)}</div>`)}
        <div class="tk act">${ic(T.alpari, 26, 18)}alpari</div>
        <div class="tk"><div class="skype">S</div></div>
        <div class="tray">
          ${ic(T.up, 14, 16)}
          ${ic(T.speaker, 15, 16)}
          ${ic(T.cloud, 16, 16)}
          ${ic(T.net, 16, 16)}
          <span class="lang">РУС</span>
          <div class="when">21:16<br />13.01.2019</div>
          ${ic(T.notif, 16, 18)}
          <div class="desk"></div>
        </div>
      </div>
    `;
  }
}
